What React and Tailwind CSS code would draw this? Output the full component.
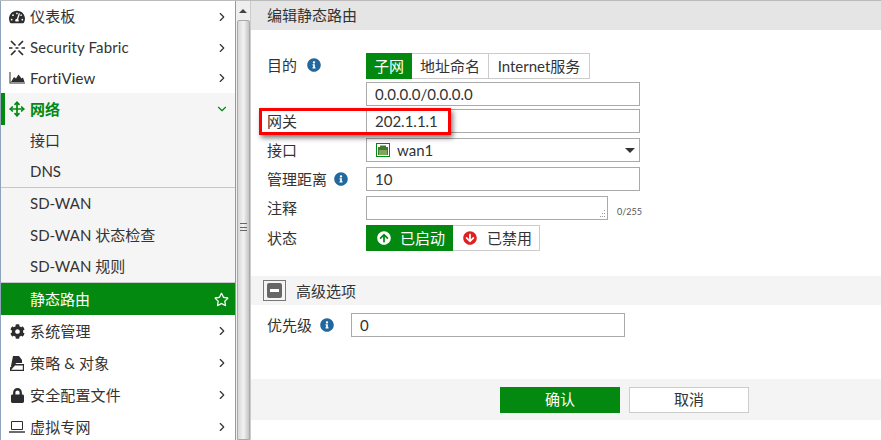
import { FaArrowCircleDown, FaArrowCircleUp, FaCog, FaInfoCircle, FaLock, FaRegStar, FaTachometerAlt } from "react-icons/fa";
import { ChevronDown, ChevronRight, Move } from "lucide-react";

const font = { fontFamily: '"Lato", "Noto Sans CJK SC", sans-serif' };

const FabricIcon = () => (
    <svg viewBox="0 0 16 16" className="w-4 h-4" fill="none" stroke="#2d2d2d" strokeWidth="1.7">
        <path d="M2 1l4.5 4.5M14 1L9.500 5.500M2 15l4.500-4.500M14 15l-4.500-4.500" />
        <path d="M0 8h3.500M12.500 8H16M6.500 8h3" strokeWidth="1.500" />
    </svg>
);

const ChartIcon = () => (
    <svg viewBox="0 0 16 12" className="w-4 h-3">
        <path d="M.5 0v11.500H16v-1H1.500V0z" fill="#2d2d2d" />
        <path d="M2 10l3-5 2 1.500L9.500 2.500l3 4 1.500-1 1.500 4.500z" fill="#2d2d2d" />
    </svg>
);

const PolicyIcon = () => (
    <svg viewBox="0 0 15 15" className="w-[15px] h-[15px]">
        <path d="M3 0h6l3 4v3H6.500L2.500 10H1z" fill="#2d2d2d" />
        <path d="M0 15v-3.500L4 8h10v7z" fill="#2d2d2d" />
        <path d="M1.200 13.800h11.600V9.500H5z" fill="#fff" />
    </svg>
);

const LaptopIcon = () => (
    <svg viewBox="0 0 16 12" className="w-4 h-3" fill="none" stroke="#2d2d2d">
        <path d="M2.500 .5h11v8h-11z" />
        <path d="M0 11h16" strokeWidth="1.400" />
    </svg>
);

const menu = [
    { label: "仪表板", h: "h-[31px]", icon: <FaTachometerAlt className="w-4 h-4 text-[#2d2d2d]" /> },
    { label: "Security Fabric", h: "h-[31px]", icon: <FabricIcon /> },
    { label: "FortiView", h: "h-[30px]", icon: <ChartIcon /> },
];

const lower = [
    { label: "系统管理", icon: <FaCog className="w-[15px] h-[15px] text-[#2d2d2d]" /> },
    { label: "策略 & 对象", icon: <PolicyIcon /> },
    { label: "安全配置文件", icon: <FaLock className="w-[13px] h-[15px] text-[#2d2d2d]" /> },
    { label: "虚拟专网", icon: <LaptopIcon /> },
];

const MenuRow = ({ label, icon, h }) => (
    <div className={`${h} flex items-center text-[15px] text-[#333]`}>
        <div className="w-4 ml-[8px] mr-[5px] shrink-0 flex items-center justify-center">{icon}</div>
        <span className="flex-1 tracking-[0.15px]">{label}</span>
        <ChevronRight className="w-[14px] h-[14px] mr-[6px] text-[#333]" strokeWidth={2} />
    </div>
);

const SubRow = ({ label, h }) => (
    <div className={`${h} flex items-center pl-[29px] text-[15px] text-[#333]`}>{label}</div>
);

const Info = () => <FaInfoCircle className="w-[14px] h-[14px] text-[#22689e]" />;

const Label = ({ children, info, gap = "gap-[10px]", width = "w-[99px]", className = "" }) => (
    <div className={`${width} shrink-0 flex items-center ${gap} text-[15px] text-[#333] ${className}`}>
        <span>{children}</span>
        {info && <Info />}
    </div>
);

const Input = ({ children, className = "w-[274px]" }) => (
    <div className={`${className} h-[24px] border border-[#aaa] bg-white flex items-center pl-[8px] text-[15px] text-[#333]`}>
        {children}
    </div>
);

export default function App() {
    return (
        <div className="w-[881px] h-[440px] overflow-hidden bg-white flex border-t-[1px] border-[#bbb]" style={font}>
            <div className="w-[236px] shrink-0 border-l border-[#8fa3bd] border-r border-r-[#999]">
                {menu.map((m) => <MenuRow key={m.label} {...m} />)}
                <div className="bg-[#f5f5f5]">
                    <div className="h-[32px] flex items-center relative font-bold text-[15px] text-[#03890f]">
                        <div className="absolute left-0 top-0 w-1 h-[32px] bg-[#03890f]" />
                        <div className="w-[29px] pl-[8px] shrink-0">
                            <Move className="w-4 h-4 text-[#03890f]" strokeWidth={2.6} />
                        </div>
                        <span className="flex-1">网络</span>
                        <ChevronDown className="w-[14px] h-[14px] mr-[6px]" strokeWidth={2} />
                    </div>
                    <SubRow label="接口" h="h-[31px]" />
                    <SubRow label="DNS" h="h-[31px]" />
                    <div className="border-t border-[#c8c8c8]" />
                    <SubRow label="SD-WAN" h="h-[31px]" />
                    <SubRow label="SD-WAN 状态检查" h="h-[32px]" />
                    <SubRow label="SD-WAN 规则" h="h-[31px]" />
                    <div className="border-t border-[#c8c8c8]" />
                </div>
                <div className="h-[32px] bg-[#03890f] flex items-center pl-[29px] pr-[6px] text-[15px] text-white">
                    <span className="flex-1">静态路由</span>
                    <FaRegStar className="w-[15px] h-[15px]" />
                </div>
                {lower.map((m) => <MenuRow key={m.label} {...m} h="h-[32px]" />)}
            </div>

            <div className="w-[15px] shrink-0 bg-[#efefef] border-r border-[#ccc] flex flex-col items-center">
                <div className="h-[19px] flex items-center justify-center">
                    <div className="border-x-[4px] border-x-transparent border-b-[4px] border-b-[#444]" />
                </div>
                <div className="flex-1 w-[13px] rounded-t-[2px] border border-[#aaa] bg-gradient-to-r from-[#d8d8d8] via-[#f2f2f2] to-[#c4c4c4] flex items-center justify-center">
                    <div className="w-[7px] h-[8px] mt-[-6px] border-y border-[#666] flex items-center">
                        <div className="w-full h-px bg-[#666]" />
                    </div>
                </div>
            </div>

            <div className="flex-1 flex flex-col relative">
                <div className="h-[29px] bg-[#e5e5e5] flex items-center pl-[16px] text-[15px] text-[#333]">编辑静态路由</div>

                <div className="pl-[16px] pt-[23px] flex flex-col">
                    <div className="flex">
                        <Label info gap="gap-[10px]" className="h-[24px]">目的</Label>
                        <div className="flex h-[26px] text-[15px] text-[#333]">
                            <div className="w-[46px] bg-[#03890f] text-white flex items-center justify-center">子网</div>
                            <div className="w-[77px] border-y border-r border-[#ccc] flex items-center justify-center">地址命名</div>
                            <div className="w-[101px] border-y border-r border-[#ccc] flex items-center justify-center">Internet服务</div>
                        </div>
                    </div>
                    <div className="flex mt-[3px] pl-[99px]"><Input>0.0.0.0/0.0.0.0</Input></div>
                    <div className="flex mt-[3px] items-center"><Label>网关</Label><Input>202.1.1.1</Input></div>
                    <div className="flex mt-[5px] items-center">
                        <Label>接口</Label>
                        <Input>
                            <svg viewBox="0 0 14 14" className="w-[14px] h-[14px] mr-[7px] ml-px">
                                <rect x=".5" y=".5" width="13" height="13" fill="#fff" stroke="#03890f" />
                                <path d="M2 12V4h2V2.500h6V4h2v8z" fill="#3f7a2e" />
                                <path d="M4 7v5M6 7v5M8 7v5M10 7v5" stroke="#e6e6a0" strokeWidth=".8" />
                            </svg>
                            <span className="flex-1">wan1</span>
                            <div className="mr-[4px] border-x-[5px] border-x-transparent border-t-[5px] border-t-[#333]" />
                        </Input>
                    </div>
                    <div className="flex mt-[5px] items-center"><Label info gap="gap-[7px]">管理距离</Label><Input>10</Input></div>
                    <div className="flex mt-[5px] items-center">
                        <Label>注释</Label>
                        <div className="w-[242px] h-[24px] border border-[#aaa] flex items-end justify-end">
                            <svg viewBox="0 0 8 8" className="w-2 h-2 mb-px mr-px" fill="#999">
                                <path d="M6 0h1v1H6zM4 3h1v1H4zM6 3h1v1H6zM2 6h1v1H2zM4 6h1v1H4zM6 6h1v1H6z" />
                            </svg>
                        </div>
                        <span className="ml-[9px] mt-[7px] text-[9px] text-[#555]">0/255</span>
                    </div>
                    <div className="flex mt-[5px] items-center">
                        <Label>状态</Label>
                        <div className="flex h-[26px] text-[15px]">
                            <div className="w-[87px] bg-[#03890f] text-white flex items-center pl-[11px] gap-[9px]">
                                <FaArrowCircleUp className="w-[14px] h-[14px]" />已启动
                            </div>
                            <div className="w-[87px] border-y border-r border-[#ccc] text-[#333] flex items-center pl-[10px] gap-[10px]">
                                <FaArrowCircleDown className="w-[14px] h-[14px] text-[#e02020]" />已禁用
                            </div>
                        </div>
                    </div>
                </div>

                <div className="mt-[25px] h-[29px] bg-[#f4f4f4] flex items-center pl-[12px] gap-[10px] text-[15px] text-[#333]">
                    <div className="w-[23px] h-[21px] border border-[#777] flex items-center justify-center">
                        <div className="w-[15px] h-[15px] rounded-[2px] bg-[#666] flex items-center justify-center">
                            <div className="w-[9px] h-[3px] bg-white" />
                        </div>
                    </div>
                    <span className="mt-px">高级选项</span>
                </div>

                <div className="flex items-center pl-[16px] mt-[8px]">
                    <Label info gap="gap-[8px]" width="w-[84px]">优先级</Label>
                    <Input>0</Input>
                </div>

                <div className="mt-auto h-[41px] mb-[20px] bg-[#f4f4f4] flex items-center justify-end gap-[9px] pr-[132px] text-[15px]">
                    <div className="w-[120px] h-[26px] bg-[#03890f] text-white flex items-center justify-center">确认</div>
                    <div className="w-[120px] h-[26px] bg-white border border-[#ccc] text-[#333] flex items-center justify-center">取消</div>
                </div>

                <div className="absolute left-[8px] top-[107px] w-[192px] h-[27px] border-[3px] border-[#f00] shadow-[2px_3px_5px_rgba(0,0,0,0.5)]" />
            </div>
        </div>
    );
}
